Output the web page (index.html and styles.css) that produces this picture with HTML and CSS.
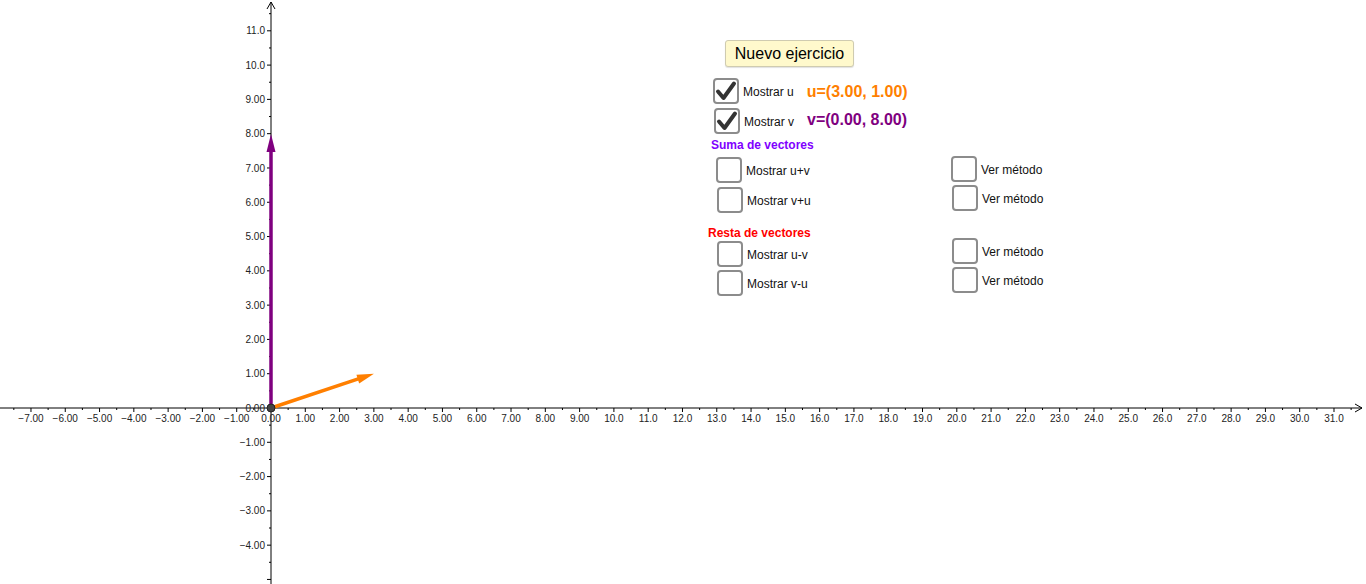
FILE: index.html
```html
<!DOCTYPE html>
<html lang="es">
<head>
<meta charset="utf-8">
<title>Suma y resta de vectores</title>
<link rel="stylesheet" href="styles.css">
</head>
<body>
<div class="applet">
  <svg class="graph" id="graph" width="1366" height="584" viewBox="0 0 1366 584" xmlns="http://www.w3.org/2000/svg">
    <g id="axes"></g>
    <g class="vectors">
      <line x1="271" y1="408" x2="271" y2="150" class="vec-v"/>
      <polygon points="271,134 266.5,152 275.5,152" class="head-v"/>
      <line x1="271" y1="408" x2="359" y2="378.7" class="vec-u"/>
      <polygon points="373.9,373.7 359.2,383.4 356.4,374.8" class="head-u"/>
      <circle cx="271" cy="408" r="4" class="origin"/>
    </g>
  </svg>

  <button class="btn-new" type="button">Nuevo ejercicio</button>

  <div class="row pos-u">
    <span class="box checked"><svg viewBox="0 0 26 26" width="26" height="26"><polyline points="5,13.5 10.5,20 21,5.5" class="tick"/></svg></span>
    <span class="lbl">Mostrar u</span>
    <span class="val val-u">u=(3.00, 1.00)</span>
  </div>
  <div class="row pos-v">
    <span class="box checked"><svg viewBox="0 0 26 26" width="26" height="26"><polyline points="5,13.5 10.5,20 21,5.5" class="tick"/></svg></span>
    <span class="lbl">Mostrar v</span>
    <span class="val val-v">v=(0.00, 8.00)</span>
  </div>

  <div class="heading suma">Suma de vectores</div>
  <div class="row pos-s1"><span class="box"></span><span class="lbl">Mostrar u+v</span></div>
  <div class="row pos-s2"><span class="box"></span><span class="lbl">Mostrar v+u</span></div>
  <div class="row pos-s3"><span class="box"></span><span class="lbl">Ver método</span></div>
  <div class="row pos-s4"><span class="box"></span><span class="lbl">Ver método</span></div>

  <div class="heading resta">Resta de vectores</div>
  <div class="row pos-r1"><span class="box"></span><span class="lbl">Mostrar u-v</span></div>
  <div class="row pos-r2"><span class="box"></span><span class="lbl">Mostrar v-u</span></div>
  <div class="row pos-r3"><span class="box"></span><span class="lbl">Ver método</span></div>
  <div class="row pos-r4"><span class="box"></span><span class="lbl">Ver método</span></div>
</div>
<script src="script.js"></script>
</body>
</html>
```

FILE: styles.css
```css
html, body {
  margin: 0;
  padding: 0;
  background: #ffffff;
}
body {
  font-family: "Liberation Sans", Arial, sans-serif;
  color: #1a1a1a;
}
.applet {
  position: relative;
  width: 1366px;
  height: 584px;
  overflow: hidden;
  background: #ffffff;
}
.graph {
  position: absolute;
  left: 0;
  top: 0;
  display: block;
}
.axis-line {
  stroke: #000;
  stroke-width: 1;
  fill: none;
}
.axis-tick {
  stroke: #000;
  stroke-width: 1;
}
.axis-label {
  font-family: "Liberation Sans", Arial, sans-serif;
  font-size: 10px;
  fill: #222;
}
.vec-v {
  stroke: #7f007f;
  stroke-width: 3.5;
}
.head-v {
  fill: #7f007f;
}
.vec-u {
  stroke: #ff7f00;
  stroke-width: 3.5;
}
.head-u {
  fill: #ff7f00;
}
.origin {
  fill: #444;
  stroke: #222;
  stroke-width: 1;
}

.btn-new {
  position: absolute;
  left: 725px;
  top: 40px;
  width: 129px;
  height: 27px;
  margin: 0;
  padding: 0;
  background: #fff9cc;
  border: 1px solid #cfcbb0;
  border-radius: 3px;
  box-shadow: 0 1px 1px rgba(0,0,0,0.12);
  font-family: "Liberation Sans", Arial, sans-serif;
  font-size: 16px;
  color: #000;
  line-height: 25px;
}

.row {
  position: absolute;
  display: flex;
  align-items: center;
  gap: 4px;
  height: 26px;
}
.box {
  box-sizing: border-box;
  width: 26px;
  height: 26px;
  border: 2px solid #8c8c8c;
  border-radius: 4px;
  background: #fff;
  flex: none;
  position: relative;
}
.box svg {
  position: absolute;
  left: -2px;
  top: -2px;
}
.tick {
  fill: none;
  stroke: #333;
  stroke-width: 4;
  stroke-linecap: round;
  stroke-linejoin: round;
}
.lbl {
  font-size: 12px;
  color: #111;
  white-space: nowrap;
  padding-top: 2px;
}
.val {
  font-size: 16px;
  font-weight: bold;
  margin-left: 9px;
  white-space: nowrap;
  padding-top: 1px;
}
.val-u { color: #ff7f00; }
.val-v { color: #7f007f; margin-top: -3px; }

.heading {
  position: absolute;
  font-size: 12px;
  font-weight: bold;
  line-height: 14px;
  white-space: nowrap;
}
.suma { left: 711px; top: 138px; color: #8000ff; }
.resta { left: 708px; top: 226px; color: #ff0000; }

.pos-u { left: 713px; top: 78px; }
.pos-v { left: 714px; top: 108px; }
.pos-s1 { left: 716px; top: 157px; }
.pos-s2 { left: 717px; top: 187px; }
.pos-s3 { left: 951px; top: 156px; }
.pos-s4 { left: 952px; top: 185px; }
.pos-r1 { left: 717px; top: 241px; }
.pos-r2 { left: 717px; top: 270px; }
.pos-r3 { left: 952px; top: 238px; }
.pos-r4 { left: 952px; top: 267px; }
```

FILE: script.js
```js
(function () {
  var NS = "http://www.w3.org/2000/svg";
  var g = document.getElementById("axes");
  var ox = 271, oy = 408, u = 34.29;

  function el(name, attrs, text) {
    var e = document.createElementNS(NS, name);
    for (var k in attrs) e.setAttribute(k, attrs[k]);
    if (text !== undefined) e.textContent = text;
    g.appendChild(e);
    return e;
  }
  function fmt(k) {
    var a = Math.abs(k);
    var s = a < 10 ? a.toFixed(2) : a.toFixed(1);
    return (k < 0 ? "\u2212" : "") + s;
  }

  el("line", { x1: 0, y1: oy, x2: 1362, y2: oy, "class": "axis-line" });
  el("polyline", { points: "1355,404 1362,408 1355,412", "class": "axis-line" });
  el("line", { x1: ox, y1: 584, x2: ox, y2: 2, "class": "axis-line" });
  el("polyline", { points: "267,9 271,2 275,9", "class": "axis-line" });

  for (var h = -15; h <= 63; h++) {
    var x = ox + h * u / 2;
    if (x < 0 || x > 1352) continue;
    if (h === 0) continue;
    var major = h % 2 === 0;
    el("line", { x1: x, y1: oy, x2: x, y2: oy + (major ? 4 : 2), "class": "axis-tick" });
  }
  for (var k = -7; k <= 31; k++) {
    var xx = ox + k * u;
    el("text", { x: xx, y: oy + 14, "text-anchor": "middle", "class": "axis-label" }, fmt(k));
  }

  for (var hv = -11; hv <= 23; hv++) {
    var y = oy - hv * u / 2;
    if (y < 8 || y > 584) continue;
    if (hv === 0) continue;
    var maj = hv % 2 === 0;
    el("line", { x1: ox - (maj ? 4 : 2), y1: y, x2: ox, y2: y, "class": "axis-tick" });
  }
  for (var kv = -4; kv <= 11; kv++) {
    var yy = oy - kv * u;
    el("text", { x: ox - 6, y: yy + 3.6, "text-anchor": "end", "class": "axis-label" }, fmt(kv));
  }
})();
```
